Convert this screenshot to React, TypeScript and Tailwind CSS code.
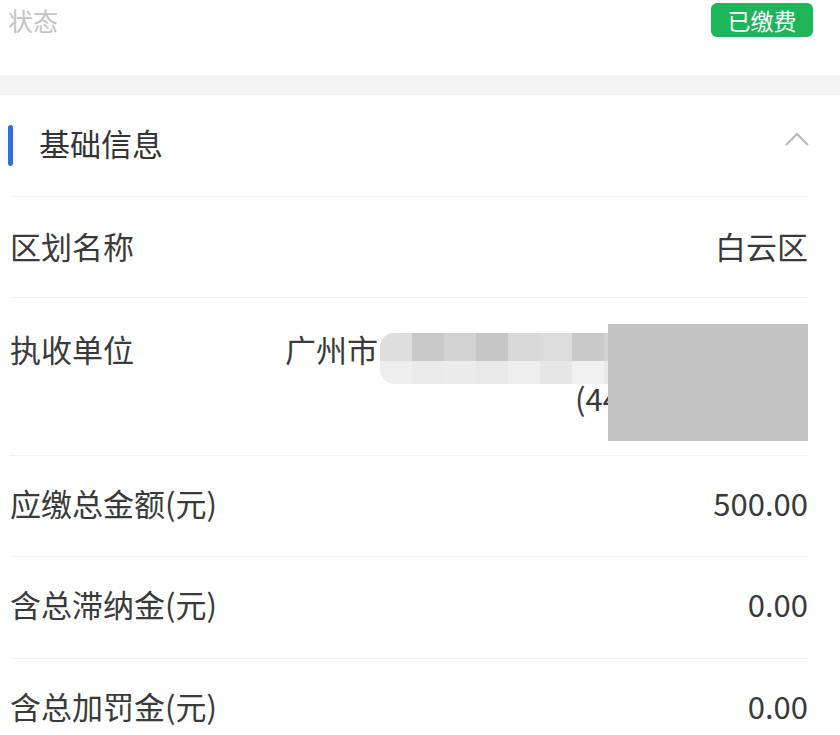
import { ReactNode } from 'react'

const font = { fontFamily: '"Noto Sans CJK SC", "Noto Sans", sans-serif' }

function Row({ label, children, className = '' }: { label: string; children?: ReactNode; className?: string }) {
  return (
    <div className={`flex items-center justify-between text-[31px] text-[#3a3a3a] ${className}`}>
      <span>{label}</span>
      <span>{children}</span>
    </div>
  )
}

function Divider() {
  return <div className="h-px bg-[#f2f2f2] mx-[10px] mr-[32px]" />
}

const mosaicTop = ['#dedede', '#c9c9c9', '#d2d2d2', '#c6c6c6', '#d9d9d9', '#dcdcdc', '#c9c9c9', '#d1d1d1', '#c8c8c8', '#cacaca']
const mosaicBottom = ['#eeeeee', '#ebebeb', '#ececec', '#e9e9e9', '#eeeeee', '#e6e6e6', '#f0f0f0', '#e9e9e9', '#dcdcdc', '#e0e0e0']

export default function App() {
  return (
    <div className="w-[840px] h-[735px] bg-white overflow-hidden" style={font}>
      <div className="h-[75px] flex justify-between items-start pl-[8px] pr-[27px]">
        <span className="mt-[2px] text-[25px] text-[#c4c4c4]">状态</span>
        <span className="mt-[3px] w-[102px] h-[34px] rounded-md bg-[#1db45a] text-white text-[23px] flex items-center justify-center">
          已缴费
        </span>
      </div>
      <div className="h-[20px] bg-[#f3f3f3]" />

      <div className="h-[101px] flex items-center justify-between pl-[8px] pr-[30px]">
        <div className="flex items-center gap-[26px]">
          <div className="w-[5px] h-[41px] rounded-full bg-[#2f6fdf]" />
          <span className="text-[31px] text-[#333] -mt-[4px]">基础信息</span>
        </div>
        <svg width="26" height="16" viewBox="0 0 26 16" className="-mt-[14px]">
          <polyline points="2,14 13,3 24,14" fill="none" stroke="#b8b8b8" strokeWidth="2" />
        </svg>
      </div>
      <Divider />

      <Row label="区划名称" className="h-[100px] pl-[10px] pr-[32px] pb-[2px]">白云区</Row>
      <Divider />

      <div className="relative h-[157px] pl-[10px] pr-[32px] flex justify-between text-[31px] text-[#3a3a3a]">
        <span className="mt-[28px]">执收单位</span>
        <div className="w-[523px] flex flex-col items-end">
          <div className="w-full mt-[28px] leading-[46px]">广州市</div>
          <div className="mt-[6px] leading-[40px] flex w-[233px] justify-between">
            <span>(44</span>
            <span>)</span>
          </div>
        </div>
        <div className="absolute left-[380px] top-[35px] w-[320px] flex flex-col overflow-hidden rounded-l-[14px]">
          <div className="flex h-[28px]">
            {mosaicTop.map((c, i) => (
              <div key={i} className="flex-1" style={{ backgroundColor: c }} />
            ))}
          </div>
          <div className="flex h-[23px]">
            {mosaicBottom.map((c, i) => (
              <div key={i} className="flex-1" style={{ backgroundColor: c }} />
            ))}
          </div>
        </div>
        <div className="absolute left-[608px] top-[26px] w-[200px] h-[117px] bg-[#c4c4c4]" />
      </div>
      <Divider />

      <Row label="应缴总金额(元)" className="h-[100px] pl-[10px] pr-[32px] pb-[6px]">500.00</Row>
      <Divider />
      <Row label="含总滞纳金(元)" className="h-[101px] pl-[10px] pr-[32px] pb-[6px]">0.00</Row>
      <Divider />
      <Row label="含总加罚金(元)" className="h-[100px] pl-[10px] pr-[32px] pb-[6px]">0.00</Row>
    </div>
  )
}
